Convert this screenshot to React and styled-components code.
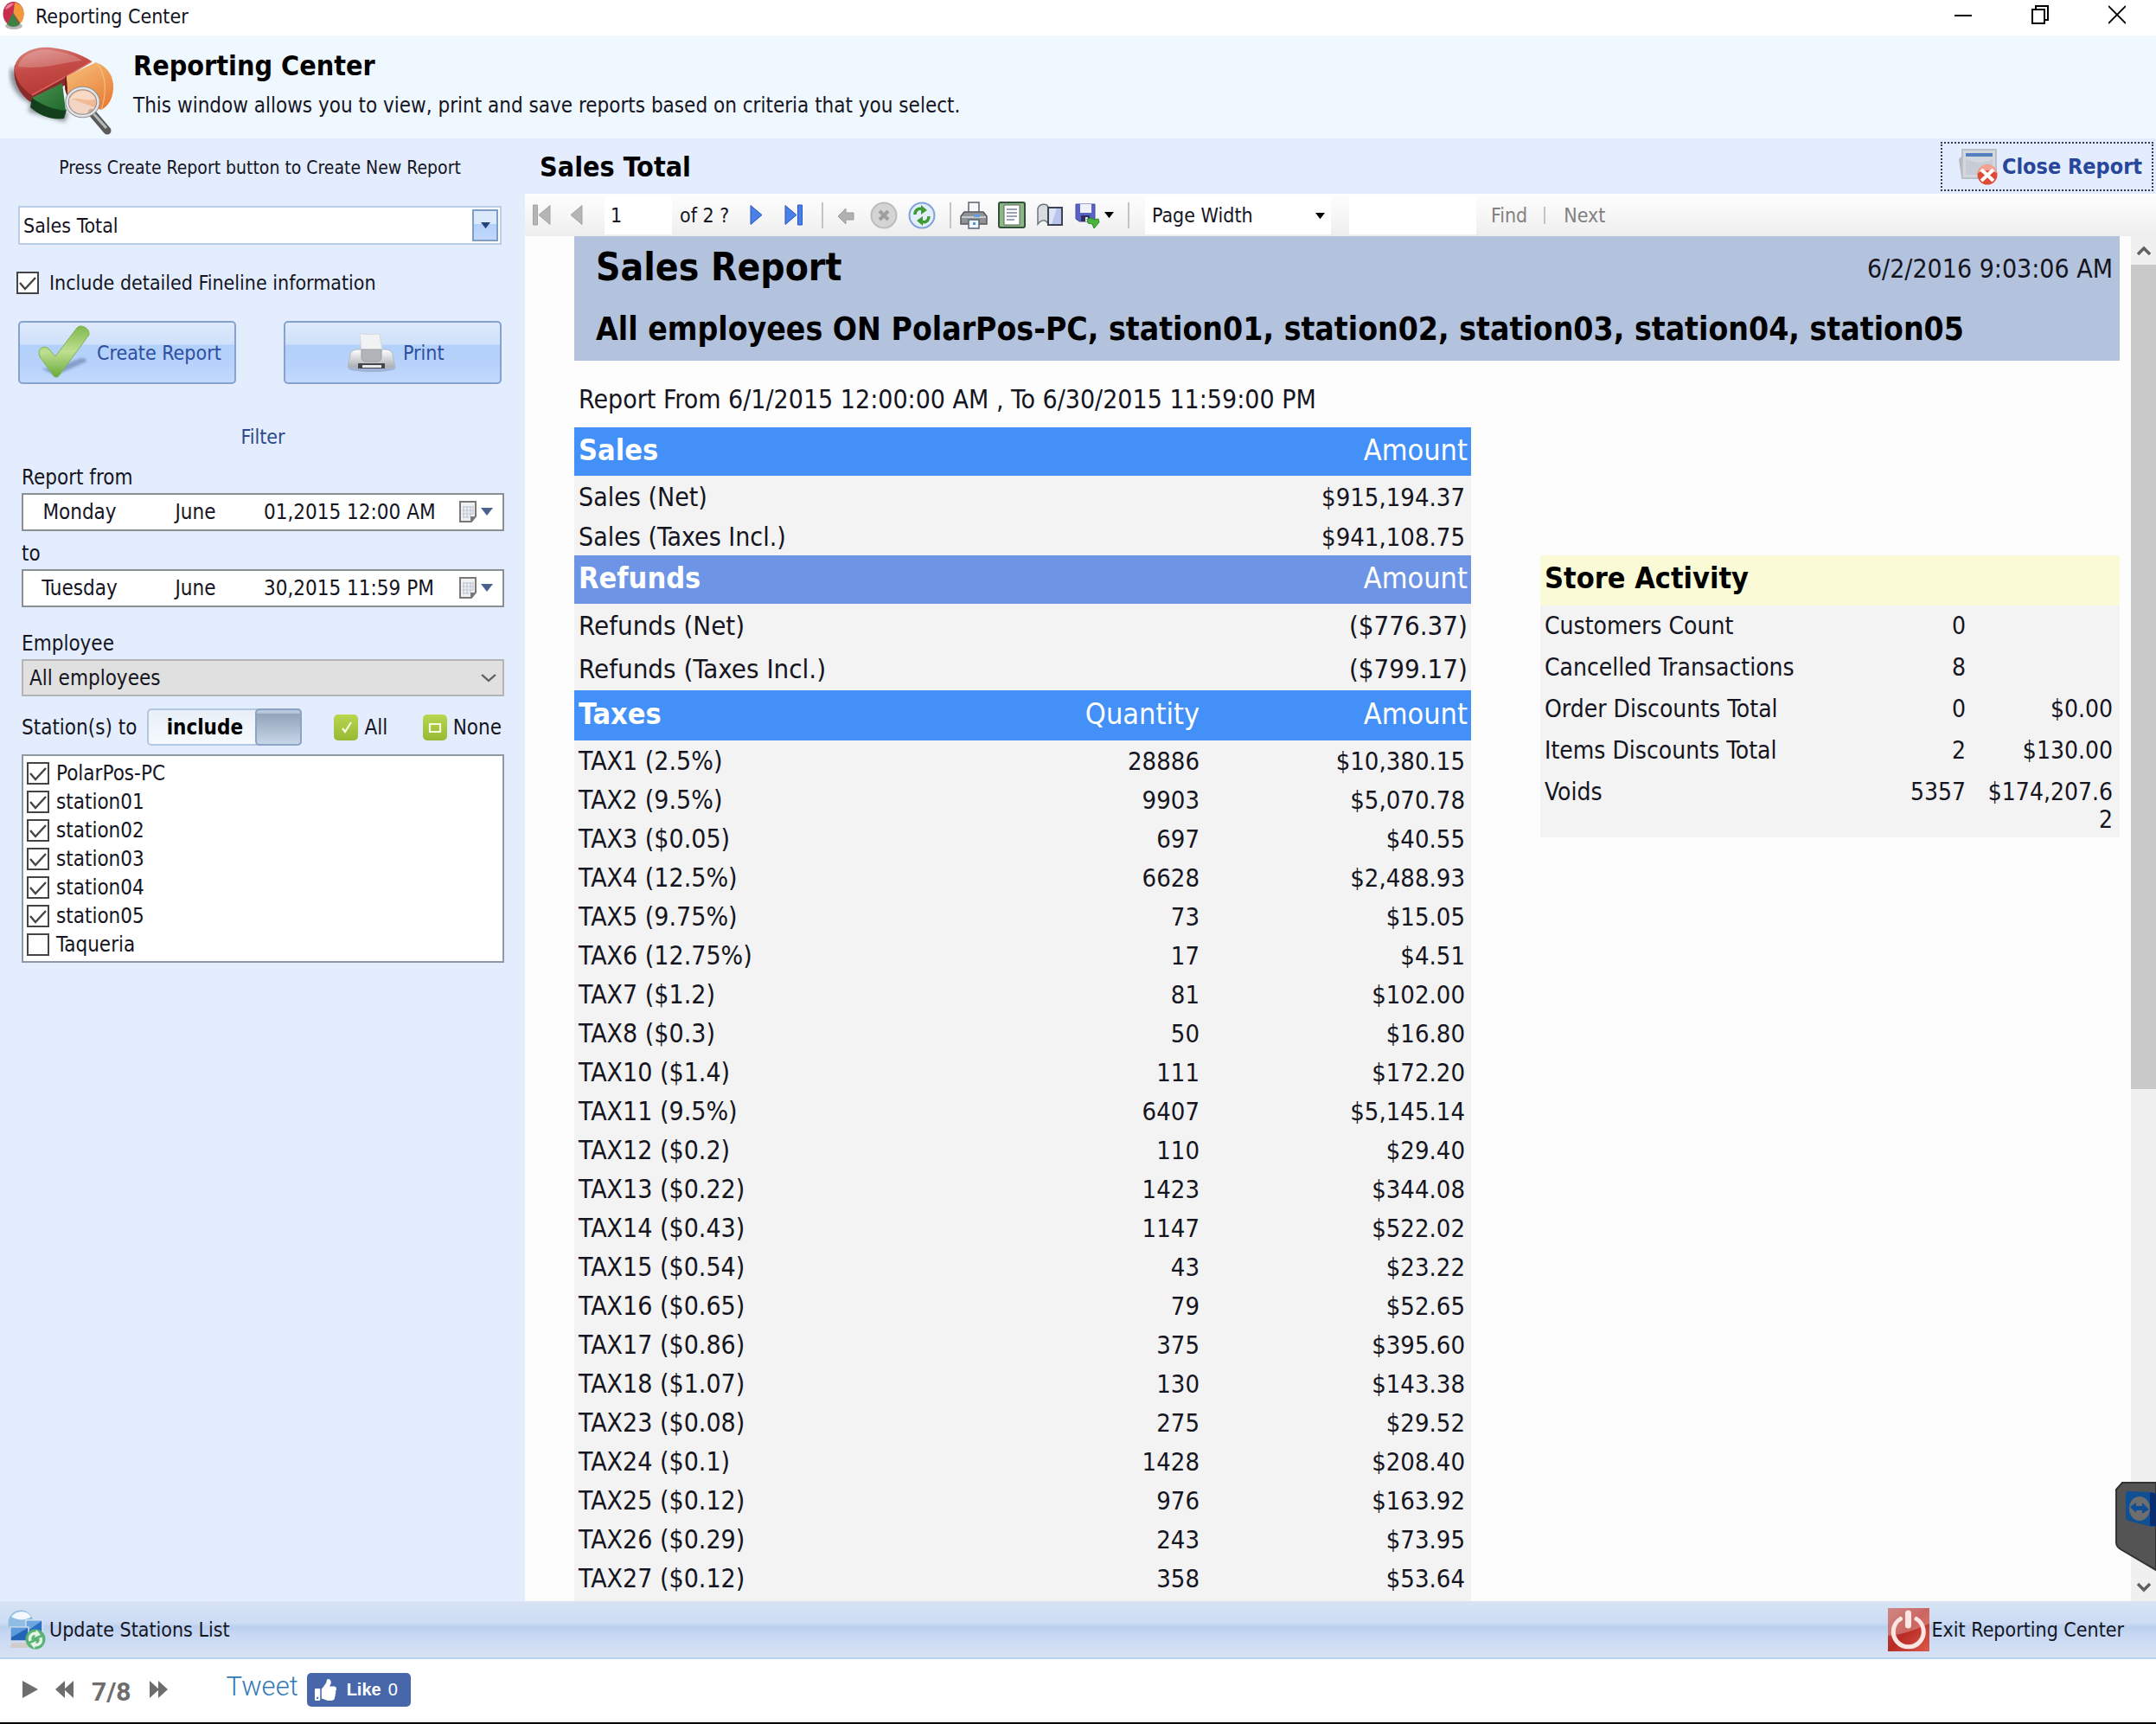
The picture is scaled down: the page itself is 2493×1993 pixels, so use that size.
import React, { useState } from "react";
import styled, { createGlobalStyle, css } from "styled-components";
import { FaThumbsUp } from "react-icons/fa";

const GlobalStyle = createGlobalStyle`
  * {
    box-sizing: border-box;
  }
  body {
    margin: 0;
    background: #fff;
    color: #15151f;
    font-family: "DejaVu Sans Condensed", "Noto Sans", sans-serif;
    font-size: 23px;
    line-height: 28px;
  }
  button,
  input,
  select {
    margin: 0;
    padding: 0;
    border: 0;
    border-radius: 0;
    background: none;
    color: inherit;
    font: inherit;
  }
  svg {
    display: block;
    flex: none;
  }
`;

/* ---------- data ---------- */

const STATIONS = [
  "PolarPos-PC",
  "station01",
  "station02",
  "station03",
  "station04",
  "station05",
  "Taqueria",
];

const SALES = [
  ["Sales (Net)", "$915,194.37"],
  ["Sales (Taxes Incl.)", "$941,108.75"],
];

const REFUNDS = [
  ["Refunds (Net)", "($776.37)"],
  ["Refunds (Taxes Incl.)", "($799.17)"],
];

const TAXES = [
  ["TAX1 (2.5%)", "28886", "$10,380.15"],
  ["TAX2 (9.5%)", "9903", "$5,070.78"],
  ["TAX3 ($0.05)", "697", "$40.55"],
  ["TAX4 (12.5%)", "6628", "$2,488.93"],
  ["TAX5 (9.75%)", "73", "$15.05"],
  ["TAX6 (12.75%)", "17", "$4.51"],
  ["TAX7 ($1.2)", "81", "$102.00"],
  ["TAX8 ($0.3)", "50", "$16.80"],
  ["TAX10 ($1.4)", "111", "$172.20"],
  ["TAX11 (9.5%)", "6407", "$5,145.14"],
  ["TAX12 ($0.2)", "110", "$29.40"],
  ["TAX13 ($0.22)", "1423", "$344.08"],
  ["TAX14 ($0.43)", "1147", "$522.02"],
  ["TAX15 ($0.54)", "43", "$23.22"],
  ["TAX16 ($0.65)", "79", "$52.65"],
  ["TAX17 ($0.86)", "375", "$395.60"],
  ["TAX18 ($1.07)", "130", "$143.38"],
  ["TAX23 ($0.08)", "275", "$29.52"],
  ["TAX24 ($0.1)", "1428", "$208.40"],
  ["TAX25 ($0.12)", "976", "$163.92"],
  ["TAX26 ($0.29)", "243", "$73.95"],
  ["TAX27 ($0.12)", "358", "$53.64"],
];

const ACTIVITY = [
  ["Customers Count", "0", ""],
  ["Cancelled Transactions", "8", ""],
  ["Order Discounts Total", "0", "$0.00"],
  ["Items Discounts Total", "2", "$130.00"],
  ["Voids", "5357", "$174,207.62"],
];

/* ---------- window frame ---------- */

const Page = styled.div`
  display: flex;
  flex-direction: column;
  height: 100vh;
  overflow: hidden;
  border-bottom: 2px solid #000;
`;

const TitleBar = styled.div`
  display: flex;
  align-items: center;
  flex: none;
  height: 41px;
  padding: 0 35px 4px 3px;
  gap: 13px;
`;

const WindowButtons = styled.div`
  display: flex;
  gap: 69px;
  margin-left: auto;
  padding-bottom: 4px;
`;

const WindowButton = styled.button`
  display: grid;
  place-items: center;
  width: 20px;
  height: 24px;
`;

const Banner = styled.header`
  display: flex;
  flex: none;
  height: 119px;
  padding: 12px 9px;
  gap: 20px;
  background: #eff7ff;
  h1 {
    margin: 4px 0 10px;
    color: #000;
    font-size: 32px;
    line-height: 38px;
  }
  p {
    margin: 0;
    font-size: 24px;
    line-height: 34px;
  }
`;

const Body = styled.div`
  display: flex;
  flex: 1;
  min-height: 0;
`;

/* ---------- sidebar ---------- */

const Sidebar = styled.aside`
  flex: none;
  width: 607px;
  background: #e3edfd;
`;

const CreateSection = styled.section`
  padding: 20px 27px 0 21px;
`;

const Hint = styled.p`
  margin: 0 0 30px;
  font-size: 21px;
  text-align: center;
`;

const Combo = styled.div`
  position: relative;
  height: 45px;
  border: 2px solid #b9cde8;
  background: #fff;
  select {
    width: 100%;
    height: 100%;
    padding-left: 4px;
    appearance: none;
  }
`;

const ComboArrow = styled.span`
  position: absolute;
  top: 2px;
  right: 2px;
  bottom: 2px;
  display: grid;
  place-items: center;
  width: 30px;
  border: 2px solid #7f9dcb;
  background: linear-gradient(#dce9fc 0 45%, #b3d0fa 46%, #c1d8fb);
  pointer-events: none;
`;

const CheckLabel = styled.label`
  display: flex;
  align-items: center;
  gap: ${(props) => props.$gap}px;
`;

const CheckBox = styled.span`
  display: grid;
  width: 26px;
  height: 26px;
  input {
    grid-area: 1 / 1;
    width: 26px;
    height: 26px;
    border: 2px solid #444;
    background: #fff;
    appearance: none;
  }
  svg {
    grid-area: 1 / 1;
    visibility: hidden;
    pointer-events: none;
  }
  input:checked + svg {
    visibility: visible;
  }
`;

const FinelineRow = styled.div`
  margin: 30px -2px;
`;

const ButtonRow = styled.div`
  display: flex;
  justify-content: space-between;
`;

const BigButton = styled.button`
  display: flex;
  align-items: center;
  width: 252px;
  height: 73px;
  padding-left: ${(props) => props.$indent}px;
  gap: 8px;
  border: 2px solid #86a3d0;
  border-radius: 5px;
  background: linear-gradient(#deeafc, #cfe0fa 36%, #b2d0fa 38%, #b8d3fb 72%, #c3d9fc);
  color: #2d4f9e;
`;

const FilterSection = styled.section`
  padding: 47px 24px 0 25px;
  font-size: 24px;
  h2 {
    margin: 0 0 19px;
    color: #2d4a8c;
    font-size: 23px;
    font-weight: 400;
    text-align: center;
  }
`;

const FieldLabel = styled.label`
  display: block;
  margin: ${(props) => props.$top ?? 0}px 0 4px;
`;

const DateField = styled.div`
  display: grid;
  grid-template-columns: 130px 112px 1fr 26px 14px;
  align-items: center;
  height: 44px;
  padding-right: 11px;
  border: 2px solid #8a8f96;
  background: #fff;
  input {
    width: 100%;
  }
  input:first-child {
    text-align: center;
  }
  input:nth-child(2) {
    text-align: center;
    padding-left: 26px;
  }
  input:nth-child(3) {
    padding-left: 36px;
  }
`;

const EmployeeSelect = styled.div`
  position: relative;
  height: 43px;
  border: 2px solid #b4b4b4;
  background: #e0e0e0;
  select {
    width: 100%;
    height: 100%;
    padding-left: 7px;
    appearance: none;
  }
  svg {
    position: absolute;
    top: 14px;
    right: 7px;
    pointer-events: none;
  }
`;

const StationRow = styled.div`
  display: flex;
  align-items: center;
  margin: 14px 0 10px;
  padding-right: 3px;
`;

const Switch = styled.button`
  display: flex;
  width: 179px;
  height: 43px;
  margin: 0 37px 0 12px;
  border: 2px solid #b3c7e3;
  border-radius: 5px;
  background: linear-gradient(#e8eff7, #f6fafe);
  color: #000;
  font-weight: 700;
  span {
    flex: 1;
    padding-left: 4px;
    line-height: 41px;
  }
  i {
    width: 54px;
    margin: -2px;
    border: 2px solid #8aa3c7;
    border-radius: 5px;
    background: linear-gradient(#b9c8da 0 8%, #94a5ba 12%, #c6d5e7);
  }
`;

const PickButton = styled.button`
  display: flex;
  align-items: center;
  gap: 7px;
  & + & {
    margin-left: auto;
  }
`;

const StationList = styled.ul`
  height: 241px;
  margin: 0;
  padding: 3px 4px;
  border: 2px solid #8f98a3;
  background: #fff;
  list-style: none;
  li {
    display: flex;
    align-items: center;
    height: 33px;
  }
`;

/* ---------- report ---------- */

const Main = styled.main`
  display: flex;
  flex: 1;
  flex-direction: column;
  min-width: 0;
`;

const ReportTitle = styled.div`
  display: flex;
  align-items: center;
  justify-content: space-between;
  flex: none;
  height: 64px;
  padding: 1px 3px 0 17px;
  background: #e3edfd;
  h2 {
    margin: 0;
    color: #000;
    font-size: 32px;
  }
`;

const CloseButton = styled.button`
  display: flex;
  align-items: center;
  height: 57px;
  padding: 0 11px 0 19px;
  gap: 5px;
  border: 2px dotted #333c4c;
  color: #28479b;
  font-size: 25px;
  font-weight: 700;
`;

const Toolbar = styled.div`
  display: flex;
  align-items: center;
  flex: none;
  height: 49px;
  background: linear-gradient(#fdfdfd, #f7f7f7 50%, #ededed);
`;

const ToolButton = styled.button`
  display: flex;
  align-items: center;
  justify-content: center;
  width: ${(props) => props.$width ?? 44}px;
  height: 44px;
  gap: 3px;
`;

const Separator = styled.span`
  width: 2px;
  height: ${(props) => (props.$short ? 20 : 30)}px;
  margin: 0 4px 0 10px;
  background: #c4c4c4;
`;

const PageInput = styled.input`
  width: 78px;
  height: 45px;
  margin-left: 10px;
  padding-left: 7px;
  background: #fff;
`;

const PageTotal = styled.span`
  width: 75px;
  padding-left: 9px;
  white-space: pre;
`;

const ZoomSelect = styled.div`
  position: relative;
  width: 215px;
  height: 45px;
  margin: 0 21px 0 14px;
  background: #fff;
  select {
    width: 100%;
    height: 100%;
    padding-left: 8px;
    appearance: none;
  }
  svg {
    position: absolute;
    top: 20px;
    right: 7px;
    pointer-events: none;
  }
`;

const FindInput = styled.input`
  width: 147px;
  height: 45px;
  background: #fff;
`;

const FindButton = styled.button`
  padding: 0 9px 0 17px;
  color: #828282;
`;

const Viewer = styled.div`
  display: flex;
  flex: 1;
  min-height: 0;
  background: #fdfdfd;
`;

const Sheet = styled.article`
  display: flex;
  flex: 1;
  flex-direction: column;
  min-width: 0;
  padding: 0 13px 0 57px;
  overflow: hidden;
`;

const SheetHeader = styled.header`
  display: grid;
  grid-template-columns: 1fr auto;
  grid-template-rows: 54px 1fr;
  flex: none;
  height: 144px;
  padding: 10px 8px 0 25px;
  background: #b3c3dd;
  h3,
  h4 {
    margin: 0;
    color: #000;
  }
  h3 {
    font-size: 44px;
    line-height: 52px;
  }
  h4 {
    grid-column: 1 / 3;
    font-size: 37px;
    line-height: 88px;
  }
  time {
    font-size: 30px;
    line-height: 56px;
  }
`;

const Period = styled.p`
  flex: none;
  margin: 27px 0 14px;
  padding-left: 5px;
  font-size: 30px;
  line-height: 36px;
`;

const Columns = styled.div`
  display: grid;
  grid-template-columns: 1037fr 670fr;
  flex: 1;
  gap: 80px;
  min-height: 0;
`;

const Ledger = styled.div`
  overflow: hidden;
  background: #f3f3f3;
`;

const cellReset = css`
  width: 100%;
  border-collapse: collapse;
  table-layout: fixed;
  th,
  td {
    padding: 0 7px 0 5px;
    text-align: right;
  }
  th:first-child,
  td:first-child {
    text-align: left;
  }
`;

const LedgerTable = styled.table`
  ${cellReset}
`;

const SectionHead = styled.tr`
  height: ${(props) => props.$height}px;
  background: ${(props) => props.$color};
  color: #fff;
  font-size: 34px;
  th {
    padding-bottom: 4px;
  }
  th + th {
    font-weight: 400;
  }
  th:last-child {
    padding-right: 4px;
  }
`;

const DataRow = styled.tr`
  height: ${(props) => props.$height}px;
  font-size: ${(props) => (props.$large ? 31 : 29)}px;
  ${(props) =>
    props.$large
      ? css`
          td:last-child {
            padding-right: 4px;
          }
        `
      : css`
          td {
            padding-top: 3px;
          }
          td:first-child {
            font-size: 30px;
          }
        `}
`;

const ActivityTable = styled.table`
  ${cellReset}
  align-self: start;
  margin-top: 148px;
  background: #f3f3f3;
  font-size: 28px;
  line-height: 32px;
  thead {
    height: 58px;
    background: #fafad7;
    color: #000;
    font-size: 34px;
  }
  thead th {
    padding-bottom: 6px;
  }
  tbody tr {
    height: 48px;
  }
  tbody td {
    padding: 8px 8px 4px 5px;
    vertical-align: top;
    word-break: break-all;
  }
  tbody td:first-child {
    word-break: normal;
  }
`;

const ScrollBar = styled.div`
  display: flex;
  flex: none;
  flex-direction: column;
  width: 29px;
  background: #f0f0f0;
`;

const ScrollButton = styled.button`
  display: grid;
  place-items: center;
  height: 33px;
`;

const ScrollTrack = styled.div`
  flex: 1;
`;

const ScrollThumb = styled.div`
  height: 63%;
  background: #c9c9c9;
`;

const RemoteTab = styled.div`
  position: absolute;
  right: 0;
  bottom: 176px;
`;

/* ---------- footers ---------- */

const StatusBar = styled.footer`
  display: flex;
  align-items: center;
  justify-content: space-between;
  flex: none;
  height: 67px;
  padding: 0 37px 0 9px;
  border-bottom: 2px solid #b7d0f5;
  background: linear-gradient(#d8e4f4, #cddcf4 38%, #bad0ef 46%, #c9d9f4 62%, #d7e2f3);
`;

const StatusButton = styled.button`
  display: flex;
  align-items: center;
  gap: ${(props) => props.$gap}px;
`;

const SlideBar = styled.nav`
  display: flex;
  align-items: center;
  flex: none;
  height: 73px;
  padding: 0 0 3px 24px;
  color: #6d6d6d;
  font-family: Roboto, sans-serif;
`;

const SlideButton = styled.button`
  display: flex;
  & + & {
    margin-left: 18px;
  }
`;

const SlideCount = styled.span`
  margin: 6px 20px 0;
  font-size: 30px;
  font-weight: 700;
`;

const TweetLink = styled.a`
  margin: 0 10px 6px 68px;
  color: #337ab7;
  font-size: 31px;
  font-weight: 300;
  text-decoration: none;
`;

const LikeButton = styled.button`
  display: flex;
  align-items: center;
  width: 120px;
  height: 39px;
  padding-left: 9px;
  gap: 12px;
  border-radius: 5px;
  background: #4867aa;
  color: #fff;
  font-family: "Liberation Sans", sans-serif;
  font-size: 20px;
  b {
    margin-right: 8px;
  }
`;

/* ---------- icons ---------- */

const Caret = ({ size = 11, color = "#000" }) => (
  <svg width={size} height={size * 0.65} viewBox="0 0 10 6" preserveAspectRatio="none">
    <path d="M0 0h10L5 6z" fill={color} />
  </svg>
);

const Tick = () => (
  <svg width="26" height="26" viewBox="0 0 26 26">
    <path d="M4 13l6 7L22 7" fill="none" stroke="#444" strokeWidth="2.4" />
  </svg>
);

const Chevron = ({ up, width = 16, stroke = 3.4 }) => (
  <svg width={width} height="12" viewBox="0 0 16 12" preserveAspectRatio="none">
    <path d={up ? "M1 10l7-7 7 7" : "M1 2l7 7 7-7"} fill="none" stroke="#606060" strokeWidth={stroke} />
  </svg>
);

const PieSmall = () => (
  <svg width="25" height="33" viewBox="0 0 25 33">
    <ellipse cx="13" cy="28" rx="10" ry="4" fill="#8b8b8b" opacity=".6" />
    <ellipse cx="12.5" cy="14" rx="12" ry="14" fill="#c72d4d" />
    <path d="M14 1c7 1 11 7 10.500 14-.3 5-2 8-4 10l-8-12z" fill="#f09a3c" />
    <path d="M12 13l8 13c-4 4-11 4-15 0z" fill="#3f8142" />
    <path d="M3 9C4 4 9 1 13 2c-2 3-6 6-10 7z" fill="#e9829a" />
  </svg>
);

const PieLarge = () => (
  <svg width="125" height="104" viewBox="0 0 125 104">
    <defs>
      <linearGradient id="pieRed" x1="0" y1="0" x2="0.3" y2="1">
        <stop offset="0" stopColor="#dd8c86" />
        <stop offset=".5" stopColor="#c44b46" />
        <stop offset="1" stopColor="#b63a37" />
      </linearGradient>
      <linearGradient id="pieOrange" x1="0" y1="0" x2="0.6" y2="1">
        <stop offset="0" stopColor="#f6c27c" />
        <stop offset="1" stopColor="#e9803a" />
      </linearGradient>
      <linearGradient id="pieGreen" x1="0" y1="0" x2="1" y2="1">
        <stop offset="0" stopColor="#4b9150" />
        <stop offset="1" stopColor="#1f6a2c" />
      </linearGradient>
      <filter id="pieBlur">
        <feGaussianBlur stdDeviation="2.5" />
      </filter>
    </defs>
    <path d="M4 24C-2 44 14 62 26 66L24 76L66 88L70 78L30 60z" fill="#55585e" opacity=".65" filter="url(#pieBlur)" />
    <path d="M8 22C5 38 12 56 28 66L69 44L67 34z" fill="#8b2a2b" />
    <path d="M97 18L67 35L28 57C15 49 7 36 8 25C10 8 32 0 50 2C69 4 86 10 97 18z" fill="url(#pieRed)" />
    <path d="M97 18L68 35L28 57" fill="none" stroke="#d9655c" strokeWidth="1.5" />
    <path d="M12 24C16 8 36 3 52 5C68 8 80 12 86 17C60 20 38 28 12 24z" fill="#fff" opacity=".2" />
    <path d="M68 34L70 62L66 50L66 37z" fill="#7c1d1d" />
    <path d="M68 35L102 19C116 24 123 36 122 50C121 62 116 70 108 74L70 60z" fill="url(#pieOrange)" />
    <path d="M102 19C112 30 116 50 108 74" fill="none" stroke="#f8c88b" strokeWidth="1" />
    <path d="M28 60L26 71C36 80 50 86 65 84L68 74L50 64z" fill="#123f1c" />
    <path d="M63 43L28 60C38 68 54 74 67 75z" fill="url(#pieGreen)" />
    <path d="M97 77L115 98" stroke="#5a5a5a" strokeWidth="9" strokeLinecap="round" />
    <path d="M97 76L114 95" stroke="#b9bbb9" strokeWidth="3" />
    <ellipse cx="86.5" cy="65" rx="18" ry="16" fill="#f3c9b0" fillOpacity=".75" stroke="#8f8f8f" strokeWidth="4.5" />
    <ellipse cx="86.5" cy="65" rx="18" ry="16" fill="none" stroke="#e3e5e6" strokeWidth="2.5" />
    <path d="M72 62C76 50 96 48 101 61C92 66 82 58 72 62z" fill="#fff" opacity=".45" />
  </svg>
);

const BigCheck = () => (
  <svg width="60" height="66" viewBox="0 0 60 66">
    <defs>
      <linearGradient id="check" x1="0" y1="0" x2="0" y2="1">
        <stop offset="0" stopColor="#7fb94f" />
        <stop offset=".5" stopColor="#c0df90" />
        <stop offset="1" stopColor="#67ab3c" />
      </linearGradient>
      <filter id="checkBlur">
        <feGaussianBlur stdDeviation="1.5" />
      </filter>
    </defs>
    <path d="M4 51L20 59L56 43C56 38 50 38 44 41L22 50z" fill="#7088b4" opacity=".7" filter="url(#checkBlur)" />
    <path
      d="M1 33C1 27 8 24 12 28L20 37L45 4C49 -1 60 4 59 12L25 58C23 62 19 62 17 58L3 39C2 37 1 35 1 33z"
      fill="url(#check)"
      stroke="#7db353"
      strokeWidth="1"
    />
  </svg>
);

const PrinterLarge = () => (
  <svg width="57" height="46" viewBox="0 0 57 46">
    <defs>
      <linearGradient id="printer" x1="0" y1="0" x2="0" y2="1">
        <stop offset="0" stopColor="#fff" />
        <stop offset="1" stopColor="#a9adb3" />
      </linearGradient>
    </defs>
    <ellipse cx="29" cy="41" rx="27" ry="4" fill="#93a5c4" opacity=".7" />
    <path d="M1 40L4 24C6 20 9 19 14 19H43C48 19 51 20 53 24L56 40z" fill="url(#printer)" stroke="#b5b8bd" />
    <path d="M15 0C22 3 32 1 38 1L41 21H17z" fill="#f1f2f4" stroke="#d4d7dc" />
    <path d="M17 19H40V28C40 31 38 33 35 33H22C19 33 17 31 17 28z" fill="#b1b4b9" stroke="#9b9ea3" />
    <path d="M13 35H44V41H13z" fill="#43464c" />
    <path d="M18 37H40V40H18z" fill="#e9ebee" />
  </svg>
);

const CalendarIcon = () => (
  <svg width="22" height="26" viewBox="0 0 22 26">
    <path d="M2 1h18v17l-5 6H2z" fill="#eef0f4" stroke="#7d7678" strokeWidth="2" />
    <path d="M14 24v-6h6z" fill="#7d7678" />
    <path d="M5 7h12M5 11h12M5 15h12M5 19h8M6 6v14M10 6v14M14 6v12M17 6v10" stroke="#c1c6d2" strokeWidth="1.2" />
  </svg>
);

const GreenBadge = ({ children }) => (
  <svg width="28" height="30" viewBox="0 0 28 30">
    <defs>
      <linearGradient id="badge" x1="0" y1="0" x2="0" y2="1">
        <stop offset="0" stopColor="#b8d64f" />
        <stop offset="1" stopColor="#97b932" />
      </linearGradient>
    </defs>
    <rect width="28" height="30" rx="5" fill="url(#badge)" />
    {children}
  </svg>
);

const CloseReportIcon = () => (
  <svg width="45" height="42" viewBox="0 0 45 42">
    <path d="M0 12L4 8V34L3 33z" fill="#b4b9c1" />
    <path d="M4 1H43V34H4z" fill="#d3d7de" stroke="#bcc0c7" strokeWidth="2" />
    <path d="M8 5H39V9H8z" fill="#5580c0" />
    <path d="M8 12C20 17 30 17 39 12V30H8z" fill="#c8cdd5" />
    <ellipse cx="33" cy="30" rx="11.5" ry="11.5" fill="#dd4b37" />
    <path d="M22 28C22 15 44 15 44 28C37 24 29 24 22 28z" fill="#f4a193" />
    <path d="M26 24L40 37M40 24L26 37" stroke="#fff" strokeWidth="4" />
  </svg>
);

const StationsIcon = () => (
  <svg width="44" height="46" viewBox="0 0 44 46">
    <circle cx="15" cy="15" r="14.5" fill="#8fbde4" />
    <path d="M4 8C10 0 22 0 27 8C20 13 11 12 4 8z" fill="#f2f8fd" />
    <path d="M21 12H40V30H21z" fill="#2a6fc2" stroke="#dbe6f2" strokeWidth="1.5" />
    <path d="M22 13H39L22 25z" fill="#6ca6e2" />
    <path d="M3 20H24V36H3z" fill="#2465ba" stroke="#cfdcec" strokeWidth="1.5" />
    <path d="M4 21H23L4 32z" fill="#5c9adb" />
    <path d="M5 38H22L24 44H2z" fill="#d0ccc9" />
    <circle cx="32" cy="34" r="11.5" fill="#58b374" />
    <path d="M26 36C24 29 30 26 34 28M38 32C40 39 34 42 30 40" fill="none" stroke="#e4f5e8" strokeWidth="3.5" />
    <path d="M33 23L38 29L31 32zM31 45L26 39L33 36z" fill="#e4f5e8" />
  </svg>
);

const PowerIcon = () => (
  <svg width="48" height="50" viewBox="0 0 48 50">
    <defs>
      <linearGradient id="power" x1="0" y1="0" x2="1" y2="1">
        <stop offset="0" stopColor="#bb5b57" />
        <stop offset=".5" stopColor="#b82b25" />
        <stop offset="1" stopColor="#dd5a4a" />
      </linearGradient>
    </defs>
    <path d="M0 0H48V50H0z" fill="url(#power)" />
    <path d="M0 0H48V18C36 22 24 30 0 32z" fill="#fff" opacity=".28" />
    <path d="M14.500 12.500A17.500 17.500 0 1 0 33 12.500" fill="none" stroke="#fbe6e3" strokeWidth="5" strokeLinecap="round" />
    <path d="M23.500 6V20" stroke="#fbe6e3" strokeWidth="7" strokeLinecap="round" />
  </svg>
);

const PageArrow = ({ last, flip, color, dark }) => (
  <svg width="22" height="25" viewBox="0 0 22 25" transform={flip ? "scale(-1 1)" : undefined}>
    {last ? (
      <g fill={color} stroke={dark}>
        <path d="M1 1.500L14 12.500L1 23.500z" />
        <path d="M15.500 1H20.500V24H15.500z" />
      </g>
    ) : (
      <path d="M5 1.500L18 12.500L5 23.500z" fill={color} stroke={dark} />
    )}
  </svg>
);

const ToolIcon = ({ children, width = 32 }) => (
  <svg width={width} height="32" viewBox={`0 0 ${width} 32`}>
    {children}
  </svg>
);

/* ---------- parts ---------- */

const Check = ({ label, gap, initial = true }) => {
  const [checked, setChecked] = useState(initial);
  return (
    <CheckLabel $gap={gap}>
      <CheckBox>
        <input type="checkbox" checked={checked} onChange={() => setChecked(!checked)} />
        <Tick />
      </CheckBox>
      {label}
    </CheckLabel>
  );
};

const DateInput = ({ id, name, day, month, rest }) => (
  <DateField>
    <input id={id} aria-label={`${name} weekday`} defaultValue={day} />
    <input aria-label={`${name} month`} defaultValue={month} />
    <input aria-label={`${name} date and time`} defaultValue={rest} />
    <CalendarIcon />
    <Caret size={14} color="#4c628e" />
  </DateField>
);

const FilterPanel = () => {
  const [include, setInclude] = useState(true);
  return (
    <FilterSection>
      <h2>Filter</h2>
      <FieldLabel htmlFor="from">Report from</FieldLabel>
      <DateInput id="from" name="From" day="Monday" month="June" rest="01,2015 12:00 AM" />
      <FieldLabel htmlFor="to" $top={12}>
        to
      </FieldLabel>
      <DateInput id="to" name="To" day="Tuesday" month="June" rest="30,2015 11:59 PM" />
      <FieldLabel htmlFor="employee" $top={28}>
        Employee
      </FieldLabel>
      <EmployeeSelect>
        <select id="employee">
          <option>All employees</option>
        </select>
        <Chevron width={18} stroke={2.2} />
      </EmployeeSelect>
      <StationRow>
        <span>Station(s) to</span>
        <Switch role="switch" aria-checked={include} onClick={() => setInclude(!include)}>
          <span>include</span>
          <i />
        </Switch>
        <PickButton>
          <GreenBadge>
            <path d="M10 16l3 4 7-11" fill="none" stroke="#f5fae0" strokeWidth="2.2" />
          </GreenBadge>
          All
        </PickButton>
        <PickButton>
          <GreenBadge>
            <path d="M8 11h12v9H8z" fill="none" stroke="#f5fae0" strokeWidth="2.2" />
          </GreenBadge>
          None
        </PickButton>
      </StationRow>
      <StationList>
        {STATIONS.map((name) => (
          <li key={name}>
            <Check label={name} gap={8} initial={name !== "Taqueria"} />
          </li>
        ))}
      </StationList>
    </FilterSection>
  );
};

const ReportToolbar = () => {
  return (
    <Toolbar>
      <ToolButton $width={38} aria-label="First page">
        <PageArrow last flip color="#b5b5b5" dark="#a3a3a3" />
      </ToolButton>
      <ToolButton aria-label="Previous page">
        <PageArrow flip color="#b5b5b5" dark="#a3a3a3" />
      </ToolButton>
      <PageInput aria-label="Page" defaultValue="1" />
      <PageTotal>of 2 ?</PageTotal>
      <ToolButton aria-label="Next page">
        <PageArrow color="#4a7fe6" dark="#2458c4" />
      </ToolButton>
      <ToolButton aria-label="Last page">
        <PageArrow last color="#4a7fe6" dark="#2458c4" />
      </ToolButton>
      <Separator />
      <ToolButton aria-label="Back">
        <ToolIcon width={20}>
          <path d="M1 17L10 8V13H19V21H10V26z" fill="#b1b1b1" stroke="#9b9b9b" />
        </ToolIcon>
      </ToolButton>
      <ToolButton aria-label="Stop">
        <ToolIcon>
          <circle cx="16" cy="16" r="14.5" fill="#d4d4d4" stroke="#bcbcbc" strokeWidth="2" />
          <path d="M11 11L21 21M21 11L11 21" stroke="#9f9f9f" strokeWidth="4" />
        </ToolIcon>
      </ToolButton>
      <ToolButton aria-label="Refresh">
        <ToolIcon>
          <circle cx="16" cy="16" r="14.5" fill="#e4eefb" stroke="#7fa3d8" strokeWidth="2" />
          <path d="M8 15C8 9 13 7 17 9M24 17C24 23 19 25 16 23" fill="none" stroke="#3d9b34" strokeWidth="3.5" />
          <path d="M15 4L22 10L15 15zM17 28L10 22L17 17z" fill="#3d9b34" />
        </ToolIcon>
      </ToolButton>
      <Separator />
      <ToolButton aria-label="Print">
        <ToolIcon>
          <path d="M10 1H22V13H10z" fill="#f6f8fa" stroke="#596473" strokeWidth="1.5" />
          <path d="M5 12H27L31 17V26H1V17z" fill="#8f9296" stroke="#55585c" strokeWidth="1.5" />
          <path d="M2 17H30V19H2z" fill="#c9cbce" />
          <path d="M16 15H23V18H16z" fill="#5fa3e6" />
          <path d="M10 21H22V31H10z" fill="#eef5fb" stroke="#596473" strokeWidth="1.5" />
          <path d="M15 24H18V27H15z" fill="#4f95dd" />
        </ToolIcon>
      </ToolButton>
      <ToolButton aria-label="Print layout">
        <ToolIcon>
          <rect x="1" y="1" width="30" height="29" rx="2" fill="#8db686" stroke="#33503a" strokeWidth="2" />
          <path d="M7 4H25V27H7z" fill="#fff" stroke="#54695a" />
          <path d="M10 9H22M10 13H22M10 17H22M10 21H19" stroke="#7484a5" strokeWidth="1.5" />
        </ToolIcon>
      </ToolButton>
      <ToolButton aria-label="Page setup">
        <ToolIcon>
          <path d="M2 26V8C4 2 12 2 14 6V26C11 20 6 21 2 26z" fill="#d8dce0" stroke="#6d747c" strokeWidth="1.5" />
          <path d="M14 7H30V27H14z" fill="#dde4f6" stroke="#3d4350" strokeWidth="2" />
          <path d="M24 8H29V26H18z" fill="#b8c5ec" />
        </ToolIcon>
      </ToolButton>
      <ToolButton $width={58} aria-label="Export">
        <ToolIcon>
          <path d="M2 3H24V23H6L2 20z" fill="#5a62c4" stroke="#444aa5" />
          <path d="M7 3H20V13H7z" fill="#eef1fb" />
          <path d="M8 16H18V23H8z" fill="#2c3158" />
          <path d="M13 18H16V23H13z" fill="#dfe3f5" />
          <path d="M15 20L21 19L22 21L28 20L29 24L23 31L21 26L16 25z" fill="#4db33f" stroke="#2f8a28" />
        </ToolIcon>
        <Caret />
      </ToolButton>
      <Separator />
      <ZoomSelect>
        <select aria-label="Zoom">
          <option>Page Width</option>
        </select>
        <Caret />
      </ZoomSelect>
      <FindInput aria-label="Search text" />
      <FindButton>Find</FindButton>
      <Separator $short />
      <FindButton>Next</FindButton>
    </Toolbar>
  );
};

const Section = ({ title, color, height, children, quantity }) => (
  <tbody>
    <SectionHead $color={color} $height={height}>
      <th>{title}</th>
      <th>{quantity && "Quantity"}</th>
      <th>Amount</th>
    </SectionHead>
    {children}
  </tbody>
);

const Report = () => (
  <Sheet>
    <SheetHeader>
      <h3>Sales Report</h3>
      <time>6/2/2016 9:03:06 AM</time>
      <h4>All employees ON PolarPos-PC, station01, station02, station03, station04, station05</h4>
    </SheetHeader>
    <Period>Report From 6/1/2015 12:00:00 AM , To 6/30/2015 11:59:00 PM</Period>
    <Columns>
      <Ledger>
        <LedgerTable>
          <colgroup>
            <col />
            <col width="250" />
            <col width="307" />
          </colgroup>
          <Section title="Sales" color="#4390f8" height={56}>
            {SALES.map(([name, amount]) => (
              <DataRow key={name} $height={46}>
                <td>{name}</td>
                <td />
                <td>{amount}</td>
              </DataRow>
            ))}
          </Section>
          <Section title="Refunds" color="#6e94e5" height={56}>
            {REFUNDS.map(([name, amount]) => (
              <DataRow key={name} $height={50} $large>
                <td>{name}</td>
                <td />
                <td>{amount}</td>
              </DataRow>
            ))}
          </Section>
          <Section title="Taxes" color="#4390f8" height={58} quantity>
            {TAXES.map(([name, quantity, amount]) => (
              <DataRow key={name} $height={45}>
                <td>{name}</td>
                <td>{quantity}</td>
                <td>{amount}</td>
              </DataRow>
            ))}
          </Section>
        </LedgerTable>
      </Ledger>
      <ActivityTable>
        <colgroup>
          <col />
          <col width="120" />
          <col width="170" />
        </colgroup>
        <thead>
          <tr>
            <th colSpan="3">Store Activity</th>
          </tr>
        </thead>
        <tbody>
          {ACTIVITY.map(([name, count, amount]) => (
            <tr key={name}>
              <td>{name}</td>
              <td>{count}</td>
              <td>{amount}</td>
            </tr>
          ))}
        </tbody>
      </ActivityTable>
    </Columns>
  </Sheet>
);

const App = () => {
  return (
    <Page>
      <GlobalStyle />
      <TitleBar>
        <PieSmall />
        <span>Reporting Center</span>
        <WindowButtons>
          <WindowButton aria-label="Minimize">
            <svg width="20" height="24" viewBox="0 0 20 24">
              <path d="M0 13H20" stroke="#000" strokeWidth="2" />
            </svg>
          </WindowButton>
          <WindowButton aria-label="Restore">
            <svg width="20" height="24" viewBox="0 0 20 24">
              <path d="M1 6H15V22H1zM5 6V2H19V18H15" fill="none" stroke="#000" strokeWidth="2" />
            </svg>
          </WindowButton>
          <WindowButton aria-label="Close">
            <svg width="20" height="24" viewBox="0 0 20 24">
              <path d="M0 2L20 22M20 2L0 22" stroke="#000" strokeWidth="1.8" />
            </svg>
          </WindowButton>
        </WindowButtons>
      </TitleBar>
      <Banner>
        <PieLarge />
        <div>
          <h1>Reporting Center</h1>
          <p>This window allows you to view, print and save reports based on criteria that you select.</p>
        </div>
      </Banner>
      <Body>
        <Sidebar>
          <CreateSection>
            <Hint>Press Create Report button to Create New Report</Hint>
            <Combo>
              <select aria-label="Report">
                <option>Sales Total</option>
              </select>
              <ComboArrow>
                <Caret color="#26437e" />
              </ComboArrow>
            </Combo>
            <FinelineRow>
              <Check label="Include detailed Fineline information" gap={12} />
            </FinelineRow>
            <ButtonRow>
              <BigButton $indent={21}>
                <BigCheck />
                Create Report
              </BigButton>
              <BigButton $indent={71}>
                <PrinterLarge />
                Print
              </BigButton>
            </ButtonRow>
          </CreateSection>
          <FilterPanel />
        </Sidebar>
        <Main>
          <ReportTitle>
            <h2>Sales Total</h2>
            <CloseButton>
              <CloseReportIcon />
              Close Report
            </CloseButton>
          </ReportTitle>
          <ReportToolbar />
          <Viewer>
            <Report />
            <ScrollBar>
              <ScrollButton aria-label="Scroll up">
                <Chevron up />
              </ScrollButton>
              <ScrollTrack>
                <ScrollThumb />
              </ScrollTrack>
              <ScrollButton aria-label="Scroll down">
                <Chevron />
              </ScrollButton>
            </ScrollBar>
          </Viewer>
        </Main>
      </Body>
      <StatusBar>
        <StatusButton $gap={4}>
          <StationsIcon />
          Update Stations List
        </StatusButton>
        <StatusButton $gap={3}>
          <PowerIcon />
          Exit Reporting Center
        </StatusButton>
      </StatusBar>
      <SlideBar>
        <SlideButton aria-label="Play">
          <svg width="22" height="22" viewBox="0 0 22 22">
            <path d="M2 1L20 11L2 21z" fill="#6d6d6d" />
          </svg>
        </SlideButton>
        <SlideButton aria-label="Previous slide">
          <svg width="22" height="20" viewBox="0 0 22 20">
            <path d="M11 0V20L0 10zM21 0V20L10 10z" fill="#6d6d6d" />
          </svg>
        </SlideButton>
        <SlideCount>7/8</SlideCount>
        <SlideButton aria-label="Next slide">
          <svg width="22" height="20" viewBox="0 0 22 20">
            <path d="M1 0V20L12 10zM11 0V20L22 10z" fill="#6d6d6d" />
          </svg>
        </SlideButton>
        <TweetLink href="#tweet">Tweet</TweetLink>
        <LikeButton>
          <FaThumbsUp size={25} />
          <span>
            <b>Like</b>0
          </span>
        </LikeButton>
      </SlideBar>
      {/* remote session tab on the right edge of the screen */}
      <RemoteTab>
        <svg width="47" height="104" viewBox="0 0 47 104">
          <path d="M8 1H47V102L6 78C3 76 1 74 1 70V9z" fill="#545454" stroke="#333" strokeWidth="2" />
          <path d="M14 11L43 12C45 12 47 13 47 15V50C46 52 44 52 42 52L15 45C13 44 12 43 12 41V13C12 12 13 11 14 11z" fill="#0f4f93" />
          <path d="M40 12L47 14V51L40 51z" fill="#072d70" />
          <ellipse cx="28" cy="31" rx="12" ry="14" fill="#6e6e6e" />
          <path d="M17 29L24 24V28H31V24L39 32L31 37V33H24V36z" fill="#114f94" />
        </svg>
      </RemoteTab>
    </Page>
  );
};

export default App;
